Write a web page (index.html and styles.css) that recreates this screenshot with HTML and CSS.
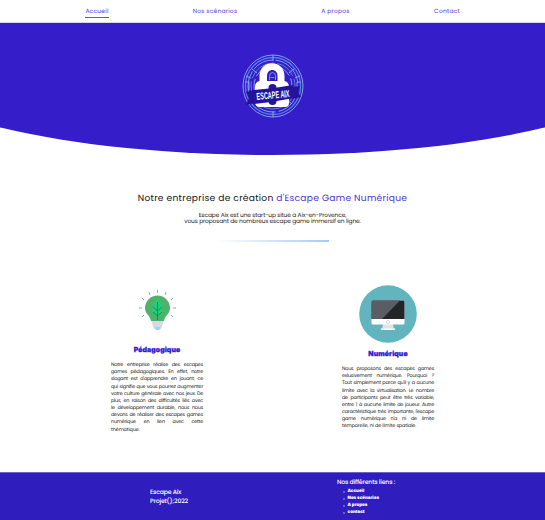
FILE: index.html
```html
<!DOCTYPE html>
<html lang="fr">
<head>
<meta charset="utf-8">
<title>Escape Aix</title>
<link rel="stylesheet" href="styles.css">
</head>
<body>
<nav class="nav">
  <a class="active">Accueil</a><a>Nos scénarios</a><a>A propos</a><a>Contact</a>
</nav>
<header class="hero">
  <div class="curve">
    <svg class="logo" viewBox="0 0 62 64">
      <g fill="none" stroke="#8faef0" stroke-width=".9">
        <ellipse cx="31" cy="32" rx="30" ry="31"/>
        <ellipse cx="31" cy="32" rx="27.6" ry="28.5" stroke="#4b86e4" stroke-width="1.3"/>
        <ellipse cx="31" cy="32" rx="25" ry="26" stroke-dasharray="34 3 22 2"/>
        <ellipse cx="31" cy="32" rx="22" ry="23" stroke="#5b8ee8" stroke-dasharray="20 3 29 3"/>
        <ellipse cx="31" cy="32" rx="19" ry="20" stroke-dasharray="25 3 13 2"/>
        <path d="M31 1v6M31 57v6M4 22l5 2M53 24l5-2M10 15l5 4M47 19l5-4M12 50l5-4M45 46l5 4M3 28h4v8M59 28h-4v8"/>
      </g>
      <path d="M17.500 27V22C17.500 5 42.500 5 42.500 22v5q4.500 1 4.500 6v16q0 4-4 4H18q-5 0-5-5V33q0-5 4.500-6z" fill="#fff"/>
      <path d="M25 27v-5c0-8 10.500-8 10.500 0V27z" fill="#321dc6"/>
      <path d="M27.500 26v-3.500q0-4 3-4t3 4v3.500M28.500 23.500h4" fill="none" stroke="#8faef0" stroke-width=".8"/>
      <path d="M26.500 34a4 4 0 1 1 8 0v13a4 4 0 1 1-8 0z" fill="#261695"/>
      <path d="M4 38l8-2 1 13-9 2 3-7zM58 32l-9 1 1 12 9-2-3-5z" fill="#241399"/>
      <path d="M10 36q20-1 41-5l1 13q-20 4-40 6z" fill="#24149c"/>
      <text x="31" y="44.500" transform="rotate(-5 31 41)" text-anchor="middle" textLength="33" lengthAdjust="spacingAndGlyphs" class="logo-text">ESCAPE AIX</text>
    </svg>
  </div>
</header>
<main>
  <section class="intro">
    <h1>Notre entreprise de création <span>d'Escape Game Numérique</span></h1>
    <p>Escape Aix est une start-up situé à Aix-en-Provence,<br>vous proposant de nombreux escape game immersif en ligne.</p>
    <div class="rule"></div>
  </section>
  <section class="features">
    <article class="feature">
      <svg class="bulb" viewBox="0 0 40 42">
        <path d="M14.500 30h12l-1.500 7q-1 3-4.500 3T16 37z" fill="#d5dbe0"/>
        <path d="M18 37h5l-1 3h-3z" fill="#94d4f6"/>
        <path d="M8 18a12.500 12.500 0 1 1 25 0c0 6-5 7-6 13H14c-1-6-6-7-6-13z" fill="#4eb36a"/>
        <path d="M20.500 9q5 5 5 11t-5 6q-5 0-5-6t5-11z" fill="#20cf79"/>
        <path d="M20.500 12v18M16 17l4.500 4 4.500-4M16 22l4.500 4 4.500-4" fill="none" stroke="#19804f" stroke-width=".8"/>
        <path d="M20.500 0v3M12 2l1 3M29 2l-1 3M5 8l2 2M36 8l-2 2M2 18h3M36 18h3M5 27l2-2M36 27l-2-2" fill="none" stroke="#65c792"/>
      </svg>
      <h2>Pédagogique</h2>
      <p class="copy"><span>Notre entreprise réalise des escapes</span><span>games pédagogiques. En effet, notre</span><span>slogant est d'apprendre en jouant, ce</span><span>qui signifie que vous pourrez augmenter</span><span>votre culture générale avec nos jeux. De</span><span>plus, en raison des difficultés liés avec</span><span>le développement durable, nous nous</span><span>devons de réaliser des escapes games</span><span>numérique en lien avec cette</span><span class="last">thématique.</span></p>
    </article>
    <article class="feature second">
      <svg class="screen" viewBox="0 0 58 58">
        <circle cx="29" cy="29" r="28.800" fill="#62b4bf"/>
        <path d="M24 39h10l1 6h-12z" fill="#dfe5e7"/><path d="M22 43.500h14v1.500H22z" fill="#fff"/>
        <rect x="12.500" y="15.500" width="33" height="24" rx="1.500" fill="#fff"/>
        <path d="M12.500 34V17q0-1.500 1.500-1.500h30q1.500 0 1.500 1.500v17z" fill="#232629"/>
        <path d="M12.500 34V17q0-1.500 1.500-1.500h27L23 34z" fill="#5a5d63"/>
        <circle cx="29" cy="37" r="1.600" fill="none" stroke="#c7cdd0" stroke-width=".7"/>
      </svg>
      <h2>Numérique</h2>
      <p class="copy"><span>Nous proposons des escapes games</span><span>exlusivement numérique. Pourquoi ?</span><span>Tout simplement parce qu'il y a aucune</span><span>limite avec la virtualisation. Le nombre</span><span>de participants peut être très variable,</span><span>entre 1 à aucune limite de joueur. Autre</span><span>caractéristique très importante, l'escape</span><span>game numérique n'a ni de limite</span><span class="last">temporelle, ni de limite spatiale.</span></p>
    </article>
  </section>
</main>
<footer>
  <div class="brand">Escape Aix<br>Projet();2022</div>
  <div class="links"><h3>Nos différents liens :</h3>
    <ul><li>Accueil</li><li>Nos scénarios</li><li>A propos</li><li>contact</li></ul>
  </div>
</footer>
</body>
</html>
```
FILE: styles.css
```css
* { box-sizing: border-box; margin: 0; padding: 0; }
body { width: 545px; height: 520px; overflow: hidden; background: #fff; color: #222; font-family: Poppins, Inter, "Liberation Sans", sans-serif; text-rendering: geometricPrecision; }
.nav { height: 23px; display: grid; grid-template-columns: 108px 128px 113px 110px; padding: 7px 0 0 43px; border-bottom: 1px solid #d9d6ea; }
.nav a { justify-self: center; height: 11px; line-height: 10px; font-size: 6px; letter-spacing: .2px; color: #5340d2; white-space: nowrap; }
.nav .active { border-bottom: 1px solid #6654d7; }
.hero { height: 132px; overflow: hidden; }
.curve { width: 140%; height: 132px; margin-left: -20%; background: #351dc9; border-radius: 0 0 50% 50% / 0 0 92px 92px; display: flex; justify-content: center; padding-top: 31px; }
.logo { width: 62px; height: 64px; overflow: visible; }
.logo-text { font: 700 10px "Liberation Sans", sans-serif; fill: #fff; }
.intro { height: 130px; padding-top: 38px; text-align: center; }
h1 { font-size: 9.100px; line-height: 12px; font-weight: 400; letter-spacing: .3px; white-space: nowrap; color: #111; }
h1 span { color: #4a32d0; }
.intro p { margin-top: 8px; font-size: 5.900px; line-height: 6px; letter-spacing: -.12px; white-space: nowrap; }
.rule { width: 113px; height: 2px; margin: 15px 0 0 216px; background: linear-gradient(90deg, #fff, #a4c9fa); }
.features { height: 187px; display: flex; }
.feature { width: 92px; margin-left: 111px; display: flex; flex-direction: column; align-items: center; }
.second { margin-left: 139px; }
.bulb { width: 40px; height: 42px; margin-top: 5px; flex: none; }
.screen { width: 58px; height: 58px; flex: none; }
h2 { height: 10px; margin-top: 13px; font: 900 6.900px/10px Inter, sans-serif; letter-spacing: .08px; color: #3018d0; -webkit-text-stroke: .25px #3018d0; }
.second h2 { margin-top: 6px; }
.copy { width: 92px; margin-top: 6px; font-size: 4.900px; line-height: 7.170px; letter-spacing: -.21px; color: #222; }
.copy span { display: block; white-space: nowrap; text-align: justify; text-align-last: justify; }
.copy .last { text-align-last: left; letter-spacing: -.1px; }
footer { height: 48px; background: #301dbe; border-top: 1px solid #6e60d0; display: flex; color: #fff; }
.brand { margin-left: 150px; width: 187px; padding-top: 15px; font-size: 6.200px; line-height: 9px; letter-spacing: -.19px; font-weight: 500; }
.links { padding-top: 5px; }
.links h3 { font-size: 6.200px; line-height: 10px; letter-spacing: -.18px; font-weight: 500; }
.links ul { list-style: none; padding-top: 1px; }
.links li { display: flex; align-items: center; gap: 2.500px; padding-left: 6px; font: 900 4.400px/6.900px Inter, sans-serif; }
.links li::before { content: ""; width: 2px; height: 2px; margin-bottom: 1px; background: #7d70da; border-radius: 50%; }
```
